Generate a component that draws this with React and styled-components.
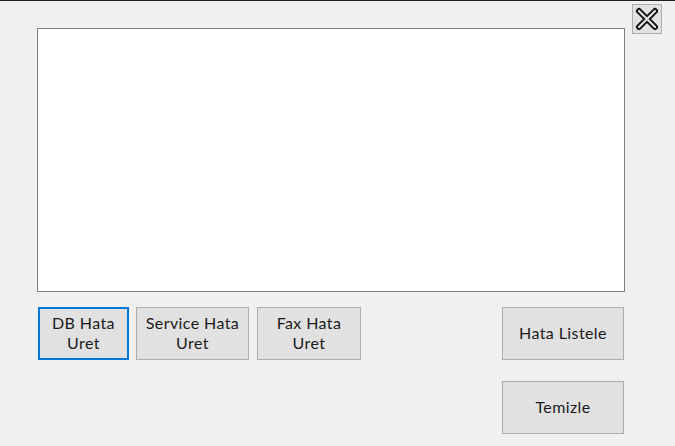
import React from "react";
import styled, { createGlobalStyle } from "styled-components";

const Global = createGlobalStyle`
  html, body {
    margin: 0;
    padding: 0;
    background: #f0f0f0;
  }
`;

const Window = styled.div`
  width: 675px;
  height: 446px;
  box-sizing: border-box;
  border-top: 1px solid #1f1f1f;
  background: #f0f0f0;
  font-family: "Lato", "Liberation Sans", sans-serif;
  display: flex;
  align-items: flex-start;
  padding-left: 37px;
`;

const Main = styled.div`
  width: 588px;
  margin-top: 27px;
  display: flex;
  flex-direction: column;
`;

const LogBox = styled.div`
  height: 264px;
  box-sizing: border-box;
  background: #fff;
  border: 1px solid #828282;
`;

const Bottom = styled.div`
  margin-top: 15px;
  display: flex;
  justify-content: space-between;
  align-items: flex-start;
`;

const Group = styled.div`
  display: flex;
  gap: 8px;
  padding-left: 1px;
`;

const Side = styled.div`
  display: flex;
  flex-direction: column;
  gap: 21px;
  margin-right: 1px;
`;

const Button = styled.button`
  width: ${(p) => p.$w}px;
  height: 53px;
  box-sizing: border-box;
  background: #e1e1e1;
  border: ${(p) => (p.$focus ? "2px solid #0078d7" : "1px solid #adadad")};
  margin-right: ${(p) => (p.$focus ? "-1px" : "0")};
  font-family: inherit;
  font-size: 16px;
  letter-spacing: 0.4px;
  line-height: 20px;
  color: #1a1a1a;
  padding: 0 0 2px;
  text-align: center;
`;

const Close = styled.button`
  width: 30px;
  height: 30px;
  margin-top: 3px;
  margin-left: 7px;
  box-sizing: border-box;
  background: #e1e1e1;
  border: 1px solid #adadad;
  padding: 0;
  display: flex;
  align-items: center;
  justify-content: center;
`;

const CloseIcon = () => (
  <svg width="24" height="24" viewBox="0 0 24 24">
    <path d="M4 4 L20 20 M20 4 L4 20" stroke="#111" strokeWidth="6" strokeLinecap="round" fill="none" />
    <path d="M4 4 L20 20 M20 4 L4 20" stroke="#e1e1e1" strokeWidth="2.2" strokeLinecap="round" fill="none" />
  </svg>
);

export default function App() {
  return (
    <>
      <Global />
      <Window>
        <Main>
          <LogBox />
          <Bottom>
            <Group>
              <Button $w={91} $focus>
                DB Hata
                <br />
                Uret
              </Button>
              <Button $w={113}>
                Service Hata
                <br />
                Uret
              </Button>
              <Button $w={104}>
                Fax Hata
                <br />
                Uret
              </Button>
            </Group>
            <Side>
              <Button $w={122}>Hata Listele</Button>
              <Button $w={122}>Temizle</Button>
            </Side>
          </Bottom>
        </Main>
        <Close>
          <CloseIcon />
        </Close>
      </Window>
    </>
  );
}
